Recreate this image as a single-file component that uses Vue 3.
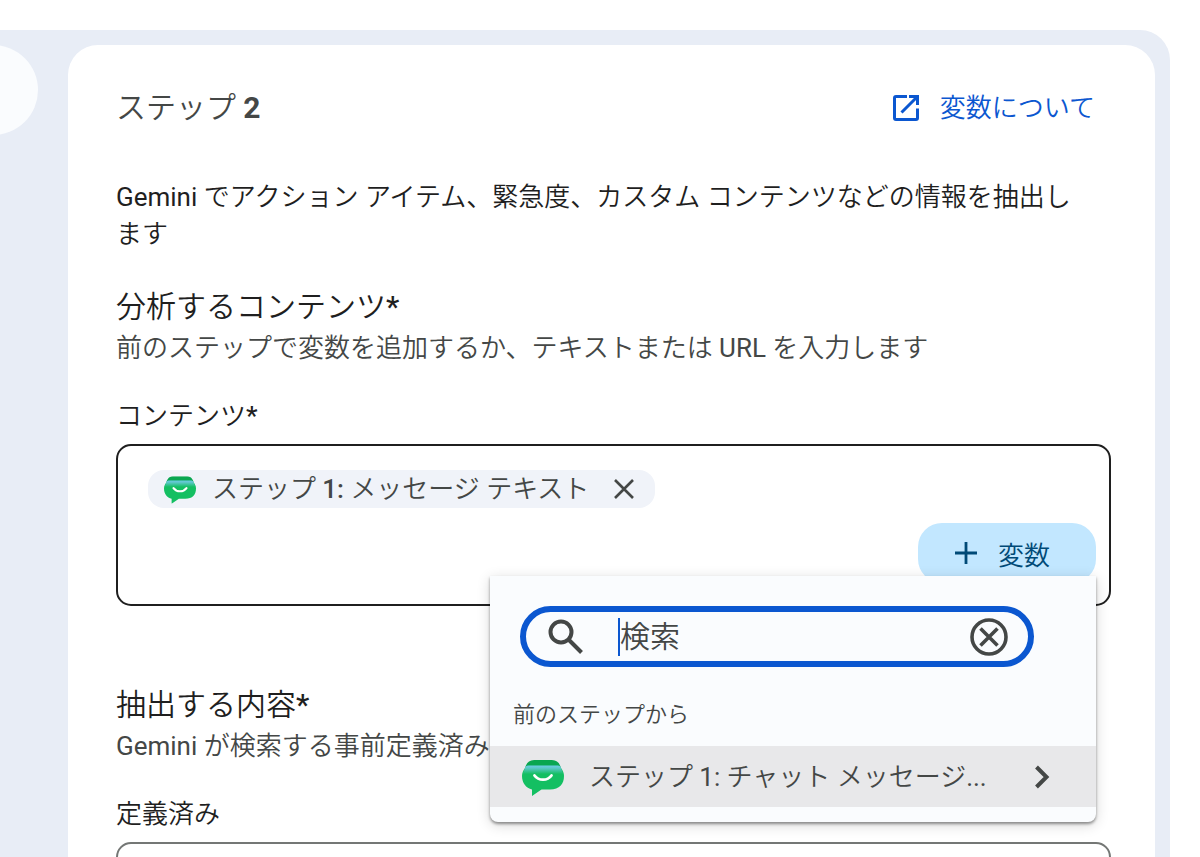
<template>
  <div class="page">
    <div class="frame">
      <div class="rail">
        <button class="rail-button" type="button" aria-label="メニュー"></button>
      </div>

      <main class="panel">
        <header class="panel-header">
          <h1 class="panel-title">ステップ <b>2</b></h1>
          <a class="help-link" href="#">
            <svg class="help-icon" viewBox="0 0 28 28" fill="none" stroke="currentColor" stroke-width="3">
              <path d="M15 2.500H4A1.500 1.500 0 0 0 2.500 4v20A1.500 1.500 0 0 0 4 25.500h20a1.500 1.500 0 0 0 1.500-1.500V14.500" />
              <path d="M17 2.500h8.500V11M25 3L9.500 18.500" />
            </svg>
            変数について
          </a>
        </header>

        <p class="description">Gemini でアクション アイテム、緊急度、カスタム コンテンツなどの情報を抽出します</p>

        <section class="section">
          <h2 class="section-title">分析するコンテンツ<b>*</b></h2>
          <p class="section-hint">前のステップで変数を追加するか、テキストまたは <span class="latin">URL</span> を入力します</p>
          <span id="content-label" class="field-label">コンテンツ<b>*</b></span>
          <div class="content-field" role="group" aria-labelledby="content-label">
            <span class="chip">
              <svg class="logo chip-icon" viewBox="0 0 42 36">
                <use href="#chat-logo" />
              </svg>
              <span class="chip-text">ステップ <b>1:</b> メッセージ テキスト</span>
              <button class="chip-remove" type="button" aria-label="削除">
                <svg viewBox="0 0 22 22" fill="none" stroke="currentColor" stroke-width="2.6">
                  <path d="M2 2l18 18M20 2L2 20" />
                </svg>
              </button>
            </span>
            <button class="variable-button" type="button" @click="menuOpen = !menuOpen">
              <svg class="plus-icon" viewBox="0 0 24 24" fill="none" stroke="currentColor" stroke-width="2.8">
                <path d="M12 1v22M1 12h22" />
              </svg>
              変数
            </button>

            <div v-if="menuOpen" class="menu">
              <div class="search">
                <svg class="search-icon" viewBox="0 0 36 36" fill="none" stroke="currentColor" stroke-width="4">
                  <circle cx="13" cy="13" r="10.500" />
                  <path d="M20.500 20.500L33.500 33.500" />
                </svg>
                <span class="caret"></span>
                <input v-model="query" class="search-input" type="text" placeholder="検索" aria-label="検索" />
                <button class="search-clear" type="button" aria-label="クリア" @click="query = ''">
                  <svg viewBox="0 0 38 38" fill="none" stroke="currentColor" stroke-width="3.600">
                    <circle cx="19" cy="19" r="17" />
                    <path d="M10.500 10.500l17 17M27.500 10.500l-17 17" />
                  </svg>
                </button>
              </div>
              <p class="menu-group">前のステップから</p>
              <button class="menu-item" type="button">
                <svg class="logo menu-icon" viewBox="0 0 42 36">
                  <use href="#chat-logo" />
                </svg>
                <span class="menu-text">ステップ <span class="latin">1:</span> チャット メッセージ<span class="latin">...</span></span>
                <svg class="menu-arrow" viewBox="0 0 16 24" fill="none" stroke="currentColor" stroke-width="4">
                  <path d="M2.500 2L12.500 12L2.500 22" />
                </svg>
              </button>
            </div>
          </div>
        </section>

        <section class="section">
          <h2 class="section-title">抽出する内容<b>*</b></h2>
          <p class="section-hint"><span class="latin">Gemini</span> が検索する事前定義済み</p>
          <label class="field-label" for="preset">定義済み</label>
          <select id="preset" class="preset-field"></select>
        </section>
      </main>
    </div>

    <svg class="defs" aria-hidden="true">
      <defs>
        <linearGradient id="logo-shade" x1="0" y1="0" x2="0" y2="1">
          <stop offset="0" stop-color="#6ccbe6" />
          <stop offset="0.3" stop-color="#5cc8c8" />
          <stop offset="1" stop-color="#14bf62" />
        </linearGradient>
        <symbol id="chat-logo" viewBox="0 0 42 36">
          <path d="M14 0h14c7 0 9 2 11 8H3C5 2 7 0 14 0z" fill="#09a650" />
          <path d="M3 8C1 11 0 13 0 16c0 7 4 12 10 13.500V36l9.500-6.500H28c9.500 0 14-5.500 14-13.500 0-3-1-5-3-8z" fill="#14bf62" />
          <path d="M3 8c0-2 2-2.500 5-2.500h26c3 0 5 .5 5 2.500l2.200 6H.8z" fill="url(#logo-shade)" />
          <path d="M12.500 15.500c4 5.600 13 5.600 17 0" fill="none" stroke="#fff" stroke-width="2.800" stroke-linecap="round" />
        </symbol>
      </defs>
    </svg>
  </div>
</template>

<script setup>
import { ref } from 'vue'

const menuOpen = ref(true)
const query = ref('')
</script>

<style>
body {
  margin: 0;
  background: #fff;
}
</style>

<style scoped>
.page {
  box-sizing: border-box;
  height: 100vh;
  padding: 30px 30px 0 0;
  overflow: hidden;
  font-family: Roboto, "Noto Sans CJK JP", sans-serif;
  font-size: 26px;
  font-weight: 350;
  color: #1f1f1f;
}

.page * {
  box-sizing: border-box;
}

button,
input,
select {
  margin: 0;
  padding: 0;
  border: 0;
  background: none;
  font: inherit;
  color: inherit;
}

button {
  cursor: pointer;
}

b {
  font-weight: 500;
}

.latin {
  font-weight: 400;
}

svg {
  display: block;
  flex: none;
}

.defs {
  position: absolute;
  width: 0;
  height: 0;
}

.frame {
  display: flex;
  min-height: 100vh;
  padding: 15px 15px 0 0;
  border-radius: 0 30px 0 0;
  background: #e8edf6;
}

.rail {
  display: flex;
  flex: none;
  justify-content: flex-end;
  width: 68px;
  padding-right: 30px;
  overflow: hidden;
}

.rail-button {
  flex: none;
  width: 90px;
  height: 90px;
  border-radius: 50%;
  background: #fafcfe;
}

.panel {
  flex: 1;
  min-width: 0;
  padding: 42px 44px 0 48px;
  border-radius: 30px 30px 0 0;
  background: #fff;
}

.panel-header {
  display: flex;
  align-items: center;
  justify-content: space-between;
  padding-right: 16px;
}

.panel-title {
  margin: 0;
  font-size: 30px;
  font-weight: 350;
  line-height: 42px;
  color: #444746;
}

.panel-title b {
  font-weight: 700;
}

.help-link {
  display: flex;
  align-items: center;
  gap: 20px;
  line-height: 40px;
  color: #0b57d0;
  text-decoration: none;
}

.help-icon {
  width: 28px;
  height: 28px;
}

.description {
  margin: 50px 16px 33px 0;
  font-family: Roboto, "Noto Sans CJK JP DemiLight", "Noto Sans CJK JP", sans-serif;
  font-weight: 400;
  line-height: 37px;
}

.section + .section {
  margin-top: 78px;
}

.section-title {
  margin: 0;
  font-size: 30px;
  font-weight: 350;
  line-height: 42px;
}

.section-hint {
  margin: 0 0 30px;
  line-height: 40px;
  color: #444746;
}

.field-label {
  display: block;
  margin-bottom: 10px;
  line-height: 36px;
}

.content-field {
  position: relative;
  display: flex;
  flex-direction: column;
  align-items: flex-start;
  gap: 15px;
  padding: 24px 13px 21px 30px;
  border: 2px solid #1f1f1f;
  border-radius: 15px;
}

.chip {
  display: flex;
  align-items: center;
  height: 38px;
  padding: 0 20px 0 16px;
  border-radius: 16px;
  background: #f0f3f9;
  color: #444746;
}

.logo {
  margin-top: 2px;
}

.chip-icon {
  width: 32px;
  height: 28px;
}

.chip-text {
  margin: 0 24px 0 16px;
  line-height: 38px;
}

.chip-remove svg {
  width: 22px;
  height: 22px;
}

.variable-button {
  display: flex;
  align-items: center;
  align-self: flex-end;
  gap: 20px;
  height: 60px;
  padding: 0 46px 0 36px;
  border-radius: 24px;
  background: #c2e7ff;
  color: #004a77;
}

.plus-icon {
  width: 24px;
  height: 24px;
}

.menu {
  position: absolute;
  z-index: 1;
  top: 130px;
  right: 13px;
  width: 606px;
  padding: 30px 0 15px;
  border-radius: 0 0 8px 8px;
  background: #fafcfe;
  box-shadow: 0 2px 3px rgba(0, 0, 0, 0.4), 0 3px 14px rgba(0, 0, 0, 0.16);
  color: #444746;
}

.search {
  display: flex;
  align-items: center;
  height: 61px;
  margin: 0 62px 0 30px;
  padding: 0 20px 0 22px;
  border: 6px solid #0b57d0;
  border-radius: 31px;
}

.search-icon {
  width: 36px;
  height: 36px;
  margin-right: 34px;
}

.caret {
  width: 2px;
  height: 38px;
  background: #0b57d0;
}

.search-input {
  flex: 1;
  min-width: 0;
  height: 40px;
  outline: none;
  font-size: 30px;
  caret-color: #0b57d0;
}

.search-input::placeholder {
  color: #444746;
  opacity: 1;
}

.search-clear svg {
  width: 38px;
  height: 38px;
}

.menu-group {
  margin: 30px 23px 13px;
  font-size: 22px;
  line-height: 36px;
}

.menu-item {
  display: flex;
  align-items: center;
  width: 100%;
  height: 61px;
  padding: 0 46px 0 32px;
  background: #e8e8ea;
  text-align: left;
}

.menu-icon {
  width: 42px;
  height: 36px;
}

.menu-text {
  flex: 1;
  min-width: 0;
  margin: 0 16px 0 25px;
  line-height: 40px;
  white-space: nowrap;
}

.menu-arrow {
  width: 16px;
  height: 24px;
}

.preset-field {
  display: block;
  width: 100%;
  height: 90px;
  border: 2px solid #747775;
  border-radius: 15px;
  appearance: none;
}
</style>
